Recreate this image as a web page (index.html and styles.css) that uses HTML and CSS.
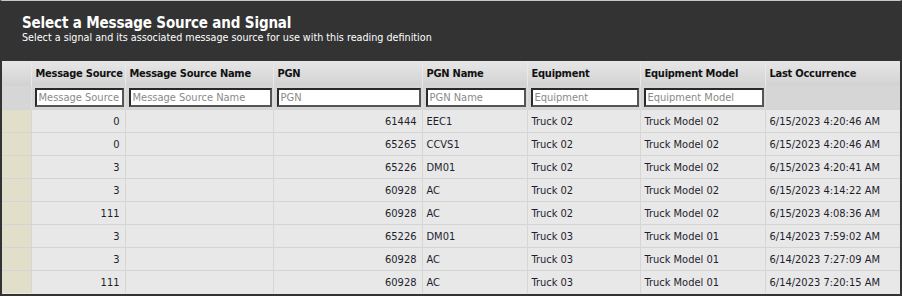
FILE: index.html
```html
<!doctype html>
<html>
<head>
	<meta charset="utf-8">
	<title>Select a Message Source and Signal</title>
	<link rel="stylesheet" href="styles.css">
</head>
<body>
	<div class="panel">
		<div class="panel-head">
			<div class="panel-title">Select a Message Source and Signal</div>
			<div class="panel-sub">Select a signal and its associated message source for use with this reading definition</div>
		</div>
		<table class="grid">
			<colgroup>
				<col class="c-ind">
				<col class="c-src">
				<col class="c-srcname">
				<col class="c-pgn">
				<col class="c-pgnname">
				<col class="c-equip">
				<col class="c-model">
				<col class="c-last">
			</colgroup>
			<thead>
				<tr class="head-row">
					<th></th>
					<th>Message Source</th>
					<th>Message Source Name</th>
					<th>PGN</th>
					<th>PGN Name</th>
					<th>Equipment</th>
					<th>Equipment Model</th>
					<th>Last Occurrence</th>
				</tr>
				<tr class="filter-row">
					<td></td>
					<td><input type="text" placeholder="Message Source"></td>
					<td><input type="text" placeholder="Message Source Name"></td>
					<td><input type="text" placeholder="PGN"></td>
					<td><input type="text" placeholder="PGN Name"></td>
					<td><input type="text" placeholder="Equipment"></td>
					<td><input type="text" placeholder="Equipment Model"></td>
					<td></td>
				</tr>
			</thead>
			<tbody>
				<tr><td class="ind"></td><td class="num">0</td><td></td><td class="num">61444</td><td>EEC1</td><td>Truck 02</td><td>Truck Model 02</td><td>6/15/2023 4:20:46 AM</td></tr>
				<tr><td class="ind"></td><td class="num">0</td><td></td><td class="num">65265</td><td>CCVS1</td><td>Truck 02</td><td>Truck Model 02</td><td>6/15/2023 4:20:46 AM</td></tr>
				<tr><td class="ind"></td><td class="num">3</td><td></td><td class="num">65226</td><td>DM01</td><td>Truck 02</td><td>Truck Model 02</td><td>6/15/2023 4:20:41 AM</td></tr>
				<tr><td class="ind"></td><td class="num">3</td><td></td><td class="num">60928</td><td>AC</td><td>Truck 02</td><td>Truck Model 02</td><td>6/15/2023 4:14:22 AM</td></tr>
				<tr><td class="ind"></td><td class="num">111</td><td></td><td class="num">60928</td><td>AC</td><td>Truck 02</td><td>Truck Model 02</td><td>6/15/2023 4:08:36 AM</td></tr>
				<tr><td class="ind"></td><td class="num">3</td><td></td><td class="num">65226</td><td>DM01</td><td>Truck 03</td><td>Truck Model 01</td><td>6/14/2023 7:59:02 AM</td></tr>
				<tr><td class="ind"></td><td class="num">3</td><td></td><td class="num">60928</td><td>AC</td><td>Truck 03</td><td>Truck Model 01</td><td>6/14/2023 7:27:09 AM</td></tr>
				<tr><td class="ind"></td><td class="num">111</td><td></td><td class="num">60928</td><td>AC</td><td>Truck 03</td><td>Truck Model 01</td><td>6/14/2023 7:20:15 AM</td></tr>
			</tbody>
		</table>
	</div>
</body>
</html>
```
FILE: styles.css
```css
html, body {
	margin: 0;
	padding: 0;
	background: #fff;
}
body {
	font-family: "DejaVu Sans Condensed", "DejaVu Sans", sans-serif;
	font-size: 11px;
	color: #1e1e2e;
}
.panel {
	width: 902px;
	height: 296px;
	box-sizing: border-box;
	border: 2px solid #333;
	border-top: 1px solid #c8c8c8;
	background: #e8e8e8;
	overflow: hidden;
}
.panel-head {
	height: 60px;
	box-sizing: border-box;
	background: #333;
	color: #fff;
	padding: 13px 0 0 20px;
}
.panel-title {
	font-weight: bold;
	font-size: 15px;
	line-height: 18px;
	letter-spacing: -0.15px;
}
.panel-sub {
	font-size: 10.7px;
	line-height: 12px;
}
.grid {
	border-collapse: collapse;
	table-layout: fixed;
	width: 898px;
}
.c-ind { width: 29px; }
.c-src { width: 94px; }
.c-srcname { width: 148px; }
.c-pgn { width: 149px; }
.c-pgnname { width: 105px; }
.c-equip { width: 113px; }
.c-model { width: 125px; }
.c-last { width: 135px; }
.grid th, .grid td {
	padding: 0 4px;
	white-space: nowrap;
	overflow: hidden;
}
.head-row th {
	height: 25px;
	box-sizing: border-box;
	text-align: left;
	font-weight: bold;
	letter-spacing: -0.25px;
	color: #111;
	background: linear-gradient(#e6e6e6, #d2d2d2);
	border-left: 1px solid #e9e9e9;
	padding-bottom: 0;
}
.head-row th:first-child {
	border-left: none;
}
.filter-row td {
	height: 23px;
	background: #d6d6d6;
	border-left: 1px solid #dedede;
	padding: 0 1px 0 3px;
}
.filter-row td:first-child {
	border-left: none;
}
.filter-row input {
	display: block;
	width: 100%;
	height: 19px;
	box-sizing: border-box;
	margin: 0;
	padding: 0 2px;
	border: 2px solid #555;
	border-top-color: #2a2a2a;
	border-left-color: #2a2a2a;
	background: #fff;
	font-family: inherit;
	font-size: 11px;
	color: #222;
	outline: none;
}
.filter-row input::placeholder {
	color: #8a8a8a;
}
tbody td {
	height: 22px;
	border-top: 1px solid #d4d4d4;
	border-left: 1px solid #d6d6d6;
	background: #e8e8e8;
}
tbody td.ind {
	background: #e1dfca;
	border-left: none;
}
tbody td.num {
	text-align: right;
	padding-right: 5px;
}
```
